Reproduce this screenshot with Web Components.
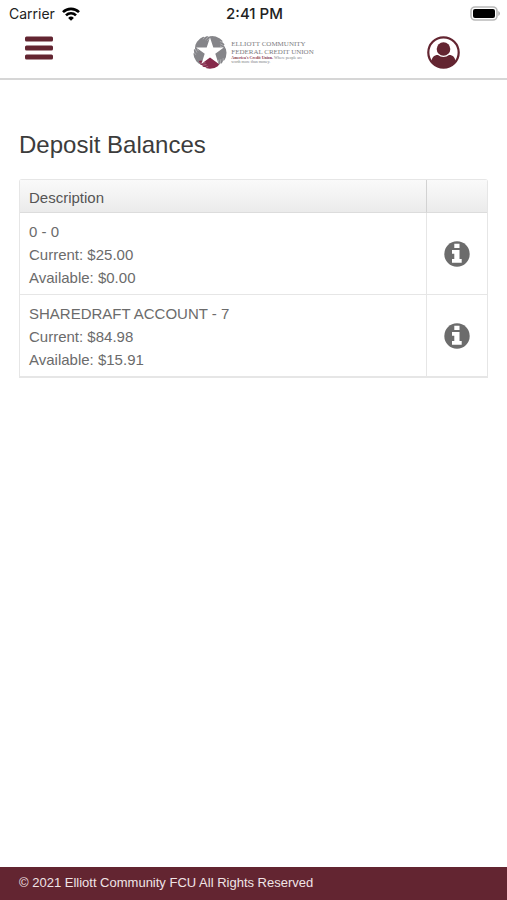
<!DOCTYPE html>
<html lang="en">
<head>
<meta charset="utf-8">
<meta name="viewport" content="width=device-width, initial-scale=1">
<title>Deposit Balances</title>
<style>
    body {
        margin: 0;
        background: #fff;
        color: #6b6b6b;
        font: 15px/23px "Liberation Sans", Arial, sans-serif;
        --brand: #632531;
        --line: #e6e6e6;
    }
</style>
</head>
<body>
<bank-app>
    <status-bar slot="top" carrier="Carrier" time="2:41 PM"></status-bar>
    <app-header slot="top"><credit-union-logo></credit-union-logo></app-header>
    <balance-table heading="Deposit Balances">
        <account-data name="0 - 0" current="$25.00" available="$0.00"></account-data>
        <account-data name="SHAREDRAFT ACCOUNT - 7" current="$84.98" available="$15.91"></account-data>
    </balance-table>
    <app-footer slot="bottom">© 2021 Elliott Community FCU All Rights Reserved</app-footer>
</bank-app>

<template id="bank-app">
    <style>
        :host {
            display: flex;
            flex-direction: column;
            min-height: 100vh;
        }
        main {
            flex: 1;
            padding: 48px 19px 24px;
        }
    </style>
    <slot name="top"></slot>
    <main><slot></slot></main>
    <slot name="bottom"></slot>
</template>

<template id="status-bar">
    <style>
        :host {
            display: grid;
            grid-template-columns: 1fr auto 1fr;
            align-items: center;
            height: 27px;
            padding: 0 7px 0 9px;
            color: #222;
            font: 14px/27px Inter, sans-serif;
        }
        .network {
            display: flex;
            align-items: center;
            gap: 7px;
        }
        .time {
            font-size: 15px;
            font-weight: 500;
        }
        svg {
            display: block;
        }
        .battery {
            justify-self: end;
        }
    </style>
    <div class="network">
        <span class="carrier"></span>
        <svg width="18" height="14" viewBox="0 0 18 14" fill="none" stroke="#000" stroke-width="2.6">
            <path d="M1 5.2a11.3 11.3 0 0 1 16 0"/>
            <path d="M4 8.4a7 7 0 0 1 10 0"/>
            <path d="M9 13.8 6.1 10.9a4.1 4.1 0 0 1 5.8 0z" fill="#000" stroke="none"/>
        </svg>
    </div>
    <span class="time"></span>
    <svg class="battery" width="30" height="15" viewBox="0 0 30 15">
        <rect x="1" y="1" width="26" height="13" rx="4" fill="#fff" stroke="#b9b9b9" stroke-width="1.6"/>
        <rect x="3" y="3" width="22" height="9" rx="2" fill="#000"/>
        <path d="M28.3 5v5q1.6-.8 1.6-2.5T28.3 5z" fill="#aaa"/>
    </svg>
</template>

<template id="app-header">
    <style>
        :host {
            display: grid;
            grid-template-columns: 1fr auto 1fr;
            align-items: start;
            height: 51px;
            padding: 0 25px;
            border-bottom: 2px solid #d6d6d6;
        }
        button {
            display: block;
            padding: 0;
            border: 0;
            background: none;
            color: var(--brand);
            cursor: pointer;
        }
        svg {
            display: block;
        }
        .menu {
            margin-top: 9px;
        }
        .profile {
            justify-self: end;
            margin: 9px 22px 0 0;
        }
        slot {
            display: block;
            margin-top: 8px;
        }
    </style>
    <button class="menu" type="button" aria-label="Menu">
        <svg width="28" height="24" viewBox="0 0 28 24" fill="currentColor">
            <rect y="0.5" width="28" height="5" rx="1.5"/>
            <rect y="9.5" width="28" height="5" rx="1.5"/>
            <rect y="18.5" width="28" height="5" rx="1.5"/>
        </svg>
    </button>
    <slot></slot>
    <button class="profile" type="button" aria-label="Profile">
        <svg width="33" height="33" viewBox="0 0 33 33" fill="currentColor">
            <circle cx="16.5" cy="16.5" r="15.2" fill="none" stroke="currentColor" stroke-width="2.2"/>
            <circle cx="16.5" cy="13" r="6.8"/>
            <path d="M4.5 25.5c.4-4 2.3-6.5 6.5-6.5 1.6 1.3 3.4 2 5.5 2s3.9-.7 5.5-2c4.2 0 6.1 2.5 6.5 6.5a15 15 0 0 1-24 0z"/>
        </svg>
    </button>
</template>

<template id="credit-union-logo">
    <style>
        :host {
            display: flex;
            align-items: center;
            gap: 4px;
            color: #7c7c80;
            font-family: "Liberation Serif", "Times New Roman", serif;
        }
        svg {
            display: block;
        }
        .name {
            font-size: 7px;
            line-height: 8px;
        }
        .tagline {
            font-size: 4px;
            line-height: 4px;
        }
        b {
            color: #8a3a50;
        }
    </style>
    <svg width="34" height="34" viewBox="-17 -17 34 34">
        <defs>
            <!-- one reaching hand: palm on the right, four fingers to the left -->
            <g id="hand">
                <path d="M-1 4.2 2.5 5.6 5.5 8 9 12.5 7.8 14.2 4.5 15.9 0 16.7-3.5 16.3-4.3 15.2-7.2 14.7-7.5 13.4-9.8 12.4-9.5 11.2-11.2 9.8-10.2 8.7-5 8.2-6 6.3-5 5.2z"/>
                <path d="M-9.5 11-4.5 10.800M-7.500 13.200-3.500 12.600M-4.300 15.200-1.800 14.400" fill="none" stroke="#fff" stroke-width=".5" opacity=".6"/>
            </g>
        </defs>
        <g fill="#858589">
            <use href="#hand" transform="rotate(72)"/>
            <use href="#hand" transform="rotate(144)"/>
            <use href="#hand" transform="rotate(216)"/>
            <use href="#hand" transform="rotate(288)"/>
        </g>
        <use href="#hand" fill="#85294a"/>
        <path d="M0-14.500 3.300-4.500 13.800-4.500 5.300 1.700 8.500 11.700 0 5.600-8.500 11.700-5.300 1.700-13.800-4.500-3.300-4.500z" fill="#fff"/>
    </svg>
    <div>
        <div class="name">ELLIOTT COMMUNITY<br>FEDERAL CREDIT UNION</div>
        <div class="tagline"><b>America's Credit Union.</b> Where people are<br>worth more than money.</div>
    </div>
</template>

<template id="balance-table">
    <style>
        :host {
            display: block;
        }
        h1 {
            margin: 0 0 18px;
            padding-top: 1px;
            color: #3c3c3c;
            font-size: 24px;
            font-weight: normal;
            line-height: 32px;
        }
        table {
            width: 100%;
            border: 1px solid var(--line);
            border-bottom-width: 2px;
            border-spacing: 0;
            border-radius: 3px 3px 0 0;
            box-sizing: border-box;
        }
        th {
            height: 33px;
            padding: 2px 9px 0;
            border-bottom: 1px solid #dcdcdc;
            background: linear-gradient(#fafafa, #ebebeb);
            box-sizing: border-box;
            color: #555;
            font-weight: normal;
            text-align: left;
        }
        td {
            padding: 7px 9px 5px;
            border-bottom: 1px solid var(--line);
        }
        tr:last-child td {
            border-bottom: 0;
        }
        th + th, td + td {
            width: 60px;
            padding: 0;
            border-left: 1px solid var(--line);
        }
        th + th {
            border-left-color: #d2d2d2;
        }
        button {
            display: block;
            margin: 0 auto;
            padding: 0;
            border: 0;
            background: none;
            color: #6c6c6c;
            cursor: pointer;
        }
        svg {
            display: block;
        }
    </style>
    <h1></h1>
    <table>
        <thead>
            <tr><th scope="col">Description</th><th></th></tr>
        </thead>
        <tbody></tbody>
    </table>
</template>

<template id="balance-row">
    <tr>
        <td>
            <div class="name"></div>
            <div>Current: <span class="current"></span></div>
            <div>Available: <span class="available"></span></div>
        </td>
        <td>
            <button type="button" aria-label="Account details">
                <svg width="26" height="26" viewBox="0 0 26 26">
                    <circle cx="13" cy="13" r="12.7" fill="currentColor"/>
                    <path d="M10.3 2.7h5.2v4.3h-5.2zM8 9h7.5v9h2.2v3.8H8V18h2.3v-5.2H8z" fill="#fff"/>
                </svg>
            </button>
        </td>
    </tr>
</template>

<template id="app-footer">
    <style>
        :host {
            display: block;
        }
        footer {
            padding: 4px 19px 6px;
            background: var(--brand);
            color: #f0e4e6;
            font-size: 13px;
        }
    </style>
    <footer><slot></slot></footer>
</template>

<script>
    const getTemplate = id => document.getElementById(id).content.cloneNode(true);

    class BaseElement extends HTMLElement {
        constructor() {
            super();
            this.attachShadow({mode: 'open'});
            this.shadowRoot.appendChild(getTemplate(this.localName));
        }
    }

    class BankApp extends BaseElement {}
    class AppHeader extends BaseElement {}
    class CreditUnionLogo extends BaseElement {}
    class AppFooter extends BaseElement {}

    class StatusBar extends BaseElement {
        connectedCallback() {
            this.shadowRoot.querySelector('.carrier').textContent = this.getAttribute('carrier');
            this.shadowRoot.querySelector('.time').textContent = this.getAttribute('time');
        }
    }

    // only carries the attributes, balance-table renders the row
    class AccountData extends HTMLElement {}

    class BalanceTable extends BaseElement {
        connectedCallback() {
            this.shadowRoot.querySelector('h1').textContent = this.getAttribute('heading');
            const body = this.shadowRoot.querySelector('tbody');
            body.innerHTML = '';

            this.querySelectorAll('account-data').forEach(account => {
                const row = getTemplate('balance-row');
                ['name', 'current', 'available'].forEach(field => {
                    row.querySelector('.' + field).textContent = account.getAttribute(field);
                });
                body.appendChild(row);
            });
        }
    }

    window.customElements.define('bank-app', BankApp);
    window.customElements.define('status-bar', StatusBar);
    window.customElements.define('app-header', AppHeader);
    window.customElements.define('credit-union-logo', CreditUnionLogo);
    window.customElements.define('account-data', AccountData);
    window.customElements.define('balance-table', BalanceTable);
    window.customElements.define('app-footer', AppFooter);
</script>
</body>
</html>
